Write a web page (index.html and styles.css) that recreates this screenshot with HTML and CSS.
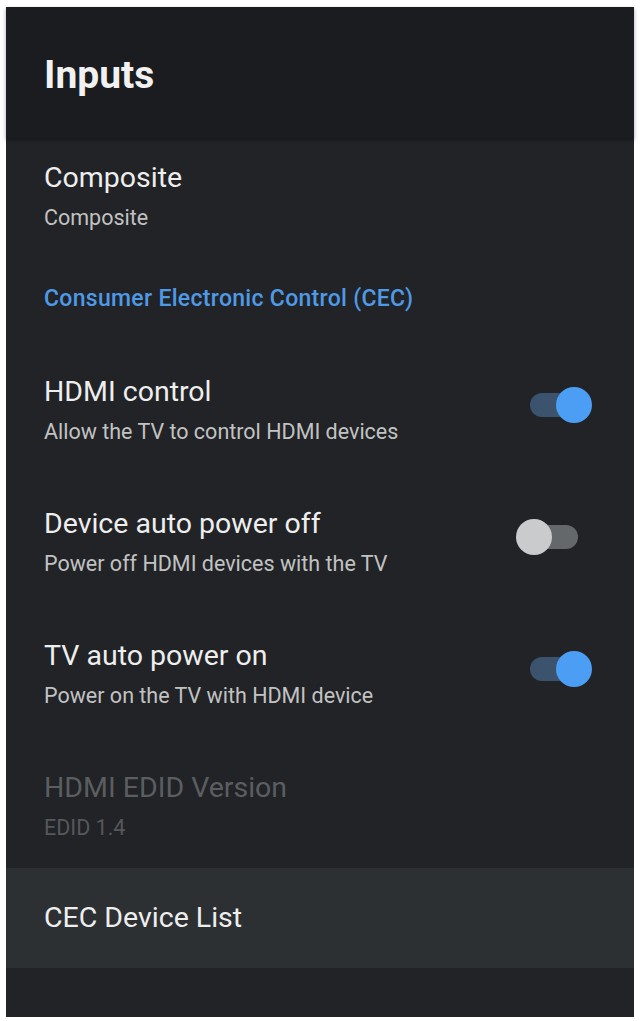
FILE: index.html
```html
<!DOCTYPE html>
<html lang="en">
<head>
    <meta charset="UTF-8">
    <meta name="viewport" content="width=device-width, initial-scale=1.0">
    <title>Inputs</title>
    <link rel="stylesheet" href="styles.css">
</head>
<body>
    <div class="panel">
        <header class="head">
            <h1 class="title">Inputs</h1>
        </header>

        <main class="list">
            <div class="item item-first">
                <div class="text">
                    <div class="primary">Composite</div>
                    <div class="secondary">Composite</div>
                </div>
            </div>

            <div class="section-label">Consumer Electronic Control (CEC)</div>

            <div class="item">
                <div class="text">
                    <div class="primary">HDMI control</div>
                    <div class="secondary">Allow the TV to control HDMI devices</div>
                </div>
                <span class="switch on"></span>
            </div>

            <div class="item">
                <div class="text">
                    <div class="primary">Device auto power off</div>
                    <div class="secondary">Power off HDMI devices with the TV</div>
                </div>
                <span class="switch"></span>
            </div>

            <div class="item">
                <div class="text">
                    <div class="primary">TV auto power on</div>
                    <div class="secondary">Power on the TV with HDMI device</div>
                </div>
                <span class="switch on"></span>
            </div>

            <div class="item item-last disabled">
                <div class="text">
                    <div class="primary">HDMI EDID Version</div>
                    <div class="secondary">EDID 1.4</div>
                </div>
            </div>

            <div class="item focused">
                <div class="text">
                    <div class="primary">CEC Device List</div>
                </div>
            </div>
        </main>
    </div>
</body>
</html>
```

FILE: styles.css
```css
body {
    margin: 0;
    padding: 7px 6px 4px;
    background-color: #ffffff;
    font-family: Roboto, "Liberation Sans", Arial, sans-serif;
}
.panel {
    height: 1010px;
    background-color: #212326;
    display: flex;
    flex-direction: column;
}
.head {
    height: 131px;
    box-sizing: border-box;
    padding: 49px 0 0 38px;
    background-color: #1a1c1f;
    box-shadow: 0 2px 4px rgba(0, 0, 0, 0.35);
}
.title {
    margin: 0;
    font-size: 39px;
    line-height: 38px;
    font-weight: 700;
    color: #f1f1f1;
}
.list {
    display: flex;
    flex-direction: column;
}
.item {
    display: flex;
    align-items: flex-start;
    padding: 30px 42px 30px 38px;
}
.item-first {
    padding-top: 22px;
}
.item-last {
    padding-bottom: 26px;
}
.text {
    flex: 1;
}
.primary {
    font-size: 28.5px;
    line-height: 36px;
    color: #eeeeee;
}
.secondary {
    margin-top: 8px;
    font-size: 21.5px;
    line-height: 28px;
    color: #c2c2c2;
}
.section-label {
    padding: 23px 38px 31px;
    font-size: 23px;
    line-height: 28px;
    font-weight: 500;
    letter-spacing: 0.3px;
    color: #4f9ae6;
}
.disabled .primary {
    color: #5b5e61;
}
.disabled .secondary {
    color: #55585b;
}
.focused {
    padding: 32px 38px;
    background-color: #2d3033;
}
.switch {
    position: relative;
    flex-shrink: 0;
    width: 76px;
    height: 36px;
    margin-top: 13px;
}
.switch::before {
    content: "";
    position: absolute;
    left: 14px;
    right: 14px;
    top: 6px;
    height: 24px;
    border-radius: 12px;
    background-color: #65686b;
}
.switch::after {
    content: "";
    position: absolute;
    top: 0;
    left: 0;
    width: 36px;
    height: 36px;
    border-radius: 50%;
    background-color: #c9cbcd;
}
.switch.on::before {
    background-color: #3c536e;
}
.switch.on::after {
    left: 40px;
    background-color: #4c9ef5;
}
```
